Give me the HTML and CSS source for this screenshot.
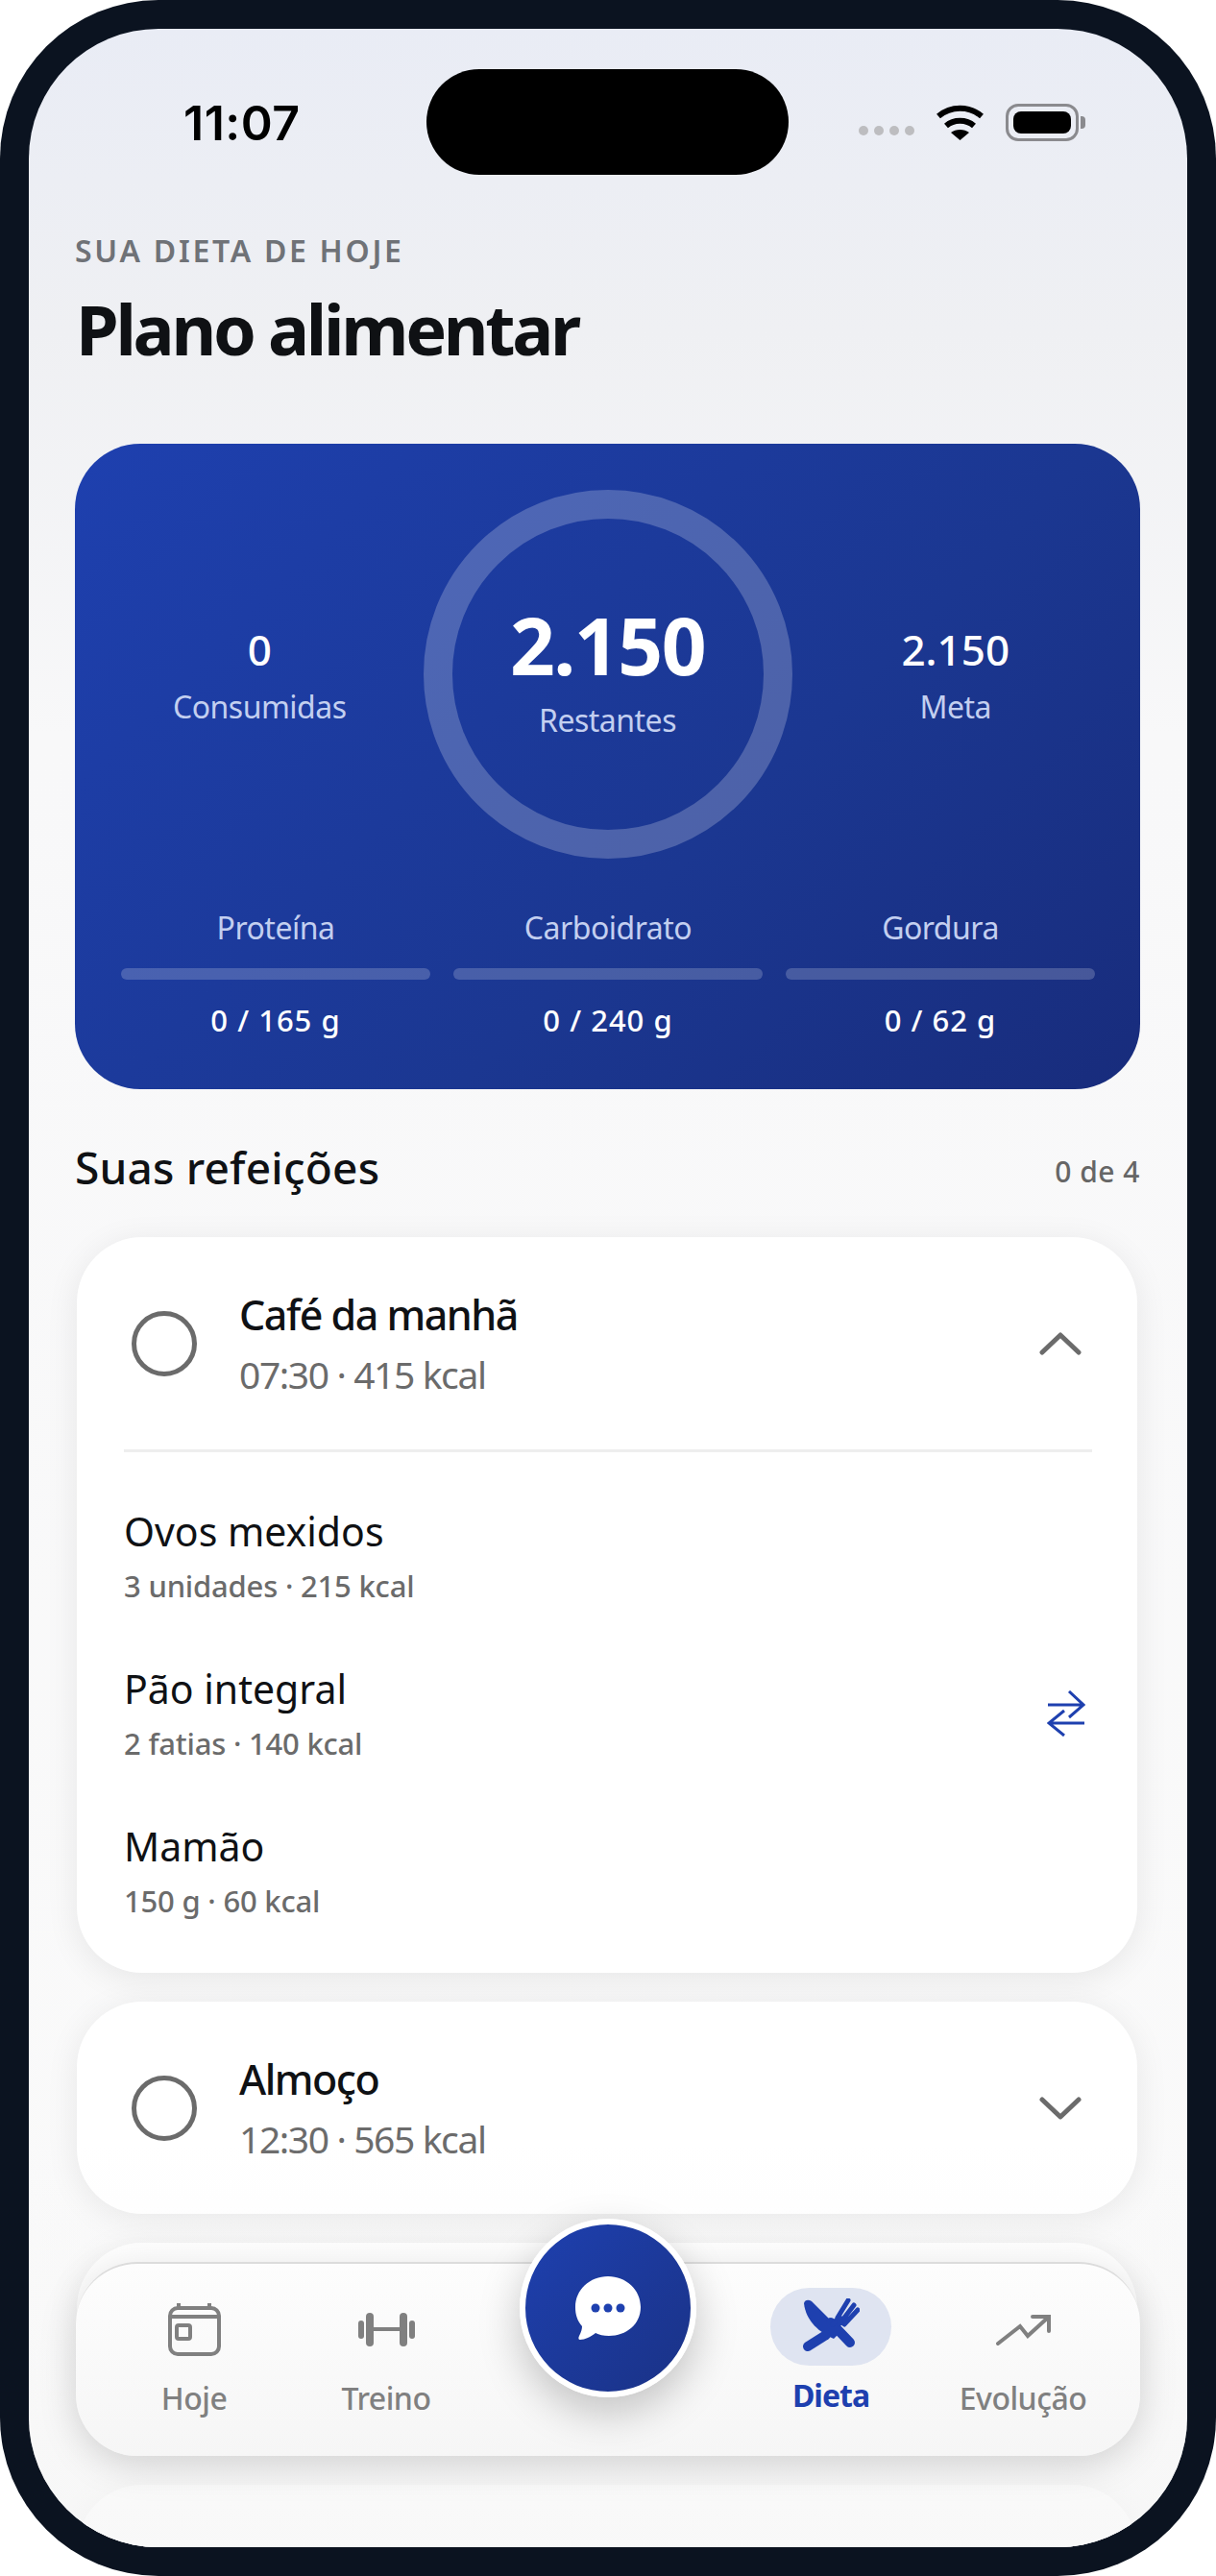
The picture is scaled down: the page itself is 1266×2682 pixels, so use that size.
FILE: index.html
```html
<!DOCTYPE html>
<html lang="pt-BR">
<head>
  <meta charset="UTF-8">
  <meta name="viewport" content="width=device-width, initial-scale=1.0">
  <title>Plano alimentar</title>
  <link rel="stylesheet" href="styles.css">
</head>
<body>

  <div class="phone">
    <div class="screen">

      <div class="notch"></div>

      <div class="status-bar">
        <span class="time">11:07</span>
        <div class="status-icons">
          <div class="signal"><span></span><span></span><span></span><span></span></div>
          <svg class="wifi" width="51" height="37" viewBox="0 0 51 37"><path d="M3 12C16 1 35 1 48 12M11 22C19 15 32 15 40 22" fill="none" stroke="#000" stroke-width="6"/><path d="M25.5 37L16 29C21 25 30 25 35 29Z"/></svg>
          <div class="battery"><div class="battery-fill"></div></div>
          <div class="battery-cap"></div>
        </div>
      </div>

      <div class="header">
        <p class="eyebrow">SUA DIETA DE HOJE</p>
        <h1 class="page-title">Plano alimentar</h1>
      </div>

      <div class="hero">
        <div class="hero-top">
          <div class="stat">
            <p class="stat-number">0</p>
            <p class="stat-label">Consumidas</p>
          </div>
          <div class="ring">
            <p class="ring-number">2.150</p>
            <p class="stat-label">Restantes</p>
          </div>
          <div class="stat">
            <p class="stat-number">2.150</p>
            <p class="stat-label">Meta</p>
          </div>
        </div>
        <div class="macros">
          <div class="macro">
            <p class="stat-label">Proteína</p>
            <div class="macro-bar"></div>
            <p class="macro-value">0 / 165 g</p>
          </div>
          <div class="macro">
            <p class="stat-label">Carboidrato</p>
            <div class="macro-bar"></div>
            <p class="macro-value">0 / 240 g</p>
          </div>
          <div class="macro">
            <p class="stat-label">Gordura</p>
            <div class="macro-bar"></div>
            <p class="macro-value">0 / 62 g</p>
          </div>
        </div>
      </div>

      <div class="section-head">
        <h2 class="section-title">Suas refeições</h2>
        <span class="section-count">0 de 4</span>
      </div>

      <div class="meal-list">

        <div class="meal">
          <div class="meal-head">
            <div class="check"></div>
            <div class="meal-info">
              <p class="meal-name">Café da manhã</p>
              <p class="meal-time">07:30 · 415 kcal</p>
            </div>
            <svg class="chevron" width="44" height="24" viewBox="0 0 44 24"><path d="M3 21L22 3L41 21" fill="none" stroke="#6b6b6b" stroke-width="5" stroke-linecap="round" stroke-linejoin="round"/></svg>
          </div>
          <div class="food-list">
            <div class="food">
              <div>
                <p class="food-name">Ovos mexidos</p>
                <p class="food-detail">3 unidades · 215 kcal</p>
              </div>
            </div>
            <div class="food">
              <div>
                <p class="food-name">Pão integral</p>
                <p class="food-detail">2 fatias · 140 kcal</p>
              </div>
              <svg class="swap" width="40" height="48" viewBox="0 0 40 48"><path d="M1 15H38M23 1L38 15L23 28M39 34H2M18 21L2 34L18 47" fill="none" stroke="#1e40af" stroke-width="3"/></svg>
            </div>
            <div class="food">
              <div>
                <p class="food-name">Mamão</p>
                <p class="food-detail">150 g · 60 kcal</p>
              </div>
            </div>
          </div>
        </div>

        <div class="meal">
          <div class="meal-head">
            <div class="check"></div>
            <div class="meal-info">
              <p class="meal-name">Almoço</p>
              <p class="meal-time">12:30 · 565 kcal</p>
            </div>
            <svg class="chevron" width="44" height="24" viewBox="0 0 44 24"><path d="M3 3L22 21L41 3" fill="none" stroke="#6b6b6b" stroke-width="5" stroke-linecap="round" stroke-linejoin="round"/></svg>
          </div>
        </div>

        <div class="meal meal-hidden"></div>
        <div class="meal meal-hidden"></div>

      </div>

      <div class="bottom-fade"></div>

      <div class="nav">
        <div class="nav-item">
          <div class="nav-icon">
            <svg width="55" height="55" viewBox="0 0 55 55" fill="none" stroke="#808080" stroke-width="4"><rect x="2" y="5" width="51" height="48" rx="8"/><path d="M2 14H53M11 0V5M43 0V5"/><rect x="9" y="23" width="14" height="14" rx="2"/></svg>
          </div>
          <span class="nav-label">Hoje</span>
        </div>
        <div class="nav-item">
          <div class="nav-icon">
            <svg width="59" height="35" viewBox="0 0 59 35" fill="#808080"><rect x="0" y="8" width="6" height="19" rx="3"/><rect x="8" y="0" width="8" height="35" rx="4"/><rect x="14" y="15" width="31" height="4"/><rect x="43" y="0" width="8" height="35" rx="4"/><rect x="53" y="8" width="6" height="19" rx="3"/></svg>
          </div>
          <span class="nav-label">Treino</span>
        </div>
        <div class="nav-gap"></div>
        <div class="nav-item nav-active">
          <div class="nav-pill">
            <svg width="60" height="60" viewBox="0 0 60 60"><path d="M2 5C3 1 7 1 10 3L30 23L41 34L33 42C19 36 4 24 2 5Z" fill="#1e40af"/><path d="M30 25L50 46" stroke="#1e40af" stroke-width="10" stroke-linecap="round"/><path d="M6 50L25 38" stroke="#1e40af" stroke-width="10" stroke-linecap="round"/><path d="M32 27L39 19M37 20L48 2M41 24L54 7M44 27L58 12" fill="none" stroke="#1e40af" stroke-width="5" stroke-linecap="round"/><path d="M37 19L44 27L36 30Z" fill="#1e40af"/></svg>
          </div>
          <span class="nav-label">Dieta</span>
        </div>
        <div class="nav-item">
          <div class="nav-icon">
            <svg width="57" height="32" viewBox="0 0 57 32" fill="none" stroke="#808080" stroke-width="4" stroke-linecap="round"><path d="M2 30L25 12L33 22L55 2M38 2H55V17"/></svg>
          </div>
          <span class="nav-label">Evolução</span>
        </div>
      </div>

      <div class="fab">
        <svg width="68" height="67" viewBox="0 0 68 67"><path d="M34 0C53 0 68 14 68 32C68 50 53 62 35 62C29 62 25 61 21 59C16 63 10 66 5 66C3 66 3 64 4 62C6 58 7 55 7 52C2 46 0 40 0 32C0 14 15 0 34 0Z" fill="#fff"/><circle cx="21" cy="33" r="4.5" fill="#1e40af"/><circle cx="34" cy="33" r="4.5" fill="#1e40af"/><circle cx="47" cy="33" r="4.5" fill="#1e40af"/></svg>
      </div>

    </div>
  </div>

</body>
</html>
```

FILE: styles.css
```css
*{
  box-sizing: border-box;
}
body{
  margin: 0;
  background-color: #fff;
  font-family: "Noto Sans", sans-serif;
}
p, h1, h2{
  margin: 0;
}
.phone{
  width: 1266px;
  height: 2682px;
  padding: 30px;
  background-color: #0b1320;
  border-radius: 165px;
}
.screen{
  position: relative;
  height: 2622px;
  padding: 0 49px 0 48px;
  overflow: hidden;
  border-radius: 135px;
  background: linear-gradient(180deg, #e9ecf5 0%, #eff0f3 12%, #f8f8f9 28%, #fafafa 100%);
}
.notch{
  position: absolute;
  left: 414px;
  top: 42px;
  width: 377px;
  height: 110px;
  border-radius: 55px;
  background-color: #000;
}
.status-bar{
  display: flex;
  justify-content: space-between;
  align-items: center;
  height: 209px;
  padding: 0 0 15px 113px;
}
.time{
  margin-top: 2px;
  font-family: Inter, sans-serif;
  font-size: 50px;
  font-weight: 600;
  letter-spacing: 0.5px;
  color: #000;
}
.status-icons{
  display: flex;
  align-items: center;
  margin-right: 57px;
}
.signal{
  display: flex;
  gap: 6px;
  margin-top: 18px;
  margin-right: 22px;
}
.signal span{
  width: 10px;
  height: 10px;
  border-radius: 50%;
  background-color: #bdbdc0;
}
.wifi{
  margin-right: 22px;
}
.battery{
  width: 76px;
  height: 39px;
  padding: 5px;
  border: 3px solid #8a8a8e;
  border-radius: 13px;
}
.battery-fill{
  height: 100%;
  border-radius: 8px;
  background-color: #000;
}
.battery-cap{
  width: 5px;
  height: 13px;
  margin-left: 2px;
  border-radius: 0 4px 4px 0;
  background-color: #8a8a8e;
}
.header{
  margin-bottom: 72px;
}
.eyebrow{
  font-size: 32px;
  line-height: 44px;
  font-weight: 600;
  letter-spacing: 2.7px;
  color: #6f7277;
}
.page-title{
  margin-top: 11px;
  margin-left: 1px;
  font-size: 72px;
  line-height: 96px;
  font-weight: 700;
  letter-spacing: -3.3px;
  color: #0f1114;
}
.hero{
  height: 672px;
  padding-top: 48px;
  border-radius: 68px;
  background: linear-gradient(135deg, #1e40af 0%, #1b3791 60%, #182c7c 100%);
}
.hero-top{
  display: grid;
  grid-template-columns: 1fr 384px 1fr;
  align-items: center;
  padding: 0 22px;
}
.stat{
  text-align: center;
}
.stat-number{
  margin-bottom: 8px;
  font-size: 44px;
  line-height: 60px;
  font-weight: 500;
  color: #fff;
}
.stat-label{
  font-size: 32px;
  line-height: 44px;
  letter-spacing: -0.5px;
  color: #c3cff0;
}
.ring{
  display: flex;
  flex-direction: column;
  justify-content: center;
  align-items: center;
  width: 384px;
  height: 384px;
  border: 30px solid rgba(255, 255, 255, 0.22);
  border-radius: 50%;
}
.ring .stat-label{
  margin-top: 12px;
}
.ring-number{
  margin-top: -6px;
  font-size: 82px;
  line-height: 90px;
  font-weight: 700;
  letter-spacing: -1.5px;
  color: #fff;
}
.macros{
  display: grid;
  grid-template-columns: repeat(3, 1fr);
  gap: 24px;
  margin-top: 50px;
  padding: 0 47px 0 48px;
}
.macro{
  text-align: center;
}
.macro-bar{
  height: 12px;
  margin-top: 20px;
  border-radius: 6px;
  background-color: rgba(255, 255, 255, 0.2);
}
.macro-value{
  margin-top: 20px;
  font-size: 31px;
  line-height: 44px;
  font-weight: 500;
  letter-spacing: 1px;
  color: #fff;
}
.section-head{
  display: flex;
  justify-content: space-between;
  align-items: center;
  height: 60px;
  margin-top: 51px;
}
.section-title{
  font-size: 46px;
  line-height: 60px;
  font-weight: 500;
  letter-spacing: 0.2px;
  color: #0f1114;
}
.section-count{
  margin-top: 8px;
  font-size: 30px;
  font-weight: 500;
  letter-spacing: 0.5px;
  color: #666;
}
.meal-list{
  display: flex;
  flex-direction: column;
  gap: 30px;
  margin: 43px 3px 0 2px;
}
.meal{
  flex-shrink: 0;
  border-radius: 68px;
  background-color: #fff;
  box-shadow: 0 6px 34px rgba(0, 0, 0, 0.08);
}
.meal-hidden{
  height: 222px;
}
.meal-head{
  display: flex;
  align-items: center;
  height: 221px;
  padding: 0 58px 0 57px;
}
.check{
  width: 68px;
  height: 68px;
  border: 5px solid #6b6b6b;
  border-radius: 50%;
}
.meal-info{
  flex: 1;
  margin-top: 2px;
  margin-left: 44px;
}
.meal-name{
  font-size: 43px;
  line-height: 62px;
  font-weight: 500;
  letter-spacing: -1.5px;
  color: #0f1114;
}
.meal-time{
  font-size: 39px;
  line-height: 62px;
  letter-spacing: -1.4px;
  color: #6b6b6b;
}
.food-list{
  margin: 0 47px 0 49px;
  padding: 26px 0 24px;
  border-top: 3px solid #eeeeee;
}
.food{
  display: flex;
  justify-content: space-between;
  align-items: center;
  height: 164px;
}
.food-name{
  font-size: 41px;
  line-height: 60px;
  color: #0f1114;
}
.food-detail{
  margin-top: 2px;
  font-size: 31px;
  line-height: 50px;
  font-weight: 500;
  letter-spacing: -0.2px;
  color: #6b6b6b;
}
.swap{
  margin-right: 7px;
}
.bottom-fade{
  position: absolute;
  left: 0;
  right: 0;
  bottom: 0;
  height: 420px;
  background: linear-gradient(180deg, rgba(246, 246, 246, 0), rgba(246, 246, 246, 0.75));
}
.nav{
  position: absolute;
  left: 49px;
  top: 2325px;
  width: 1108px;
  height: 202px;
  display: grid;
  grid-template-columns: 200px 200px 263px 200px 200px;
  padding: 0 22px 0 23px;
  border-top: 2px solid #dcdcdc;
  border-radius: 64px;
  background: linear-gradient(180deg, #fdfdfd 0%, #f6f6f6 100%);
  box-shadow: 0 10px 40px rgba(0, 0, 0, 0.13);
}
.nav-item{
  display: flex;
  flex-direction: column;
  align-items: center;
}
.nav-icon{
  display: flex;
  justify-content: center;
  align-items: center;
  height: 55px;
  margin-top: 41px;
}
.nav-label{
  margin-top: 22px;
  font-size: 32px;
  line-height: 44px;
  font-weight: 500;
  letter-spacing: -0.5px;
  color: #808080;
}
.nav-pill{
  display: flex;
  justify-content: center;
  align-items: center;
  width: 126px;
  height: 81px;
  margin-top: 25px;
  border-radius: 41px;
  background-color: #dfe4f1;
}
.nav-active .nav-label{
  margin-top: 9px;
  font-weight: 700;
  letter-spacing: -1px;
  color: #1e40af;
}
.fab{
  position: absolute;
  left: 511px;
  top: 2280px;
  display: flex;
  justify-content: center;
  align-items: center;
  width: 184px;
  height: 186px;
  border: 6px solid #fff;
  border-radius: 50%;
  background: linear-gradient(135deg, #1e40af, #1a3286);
  box-shadow: 0 16px 44px rgba(0, 0, 0, 0.22);
}
```
